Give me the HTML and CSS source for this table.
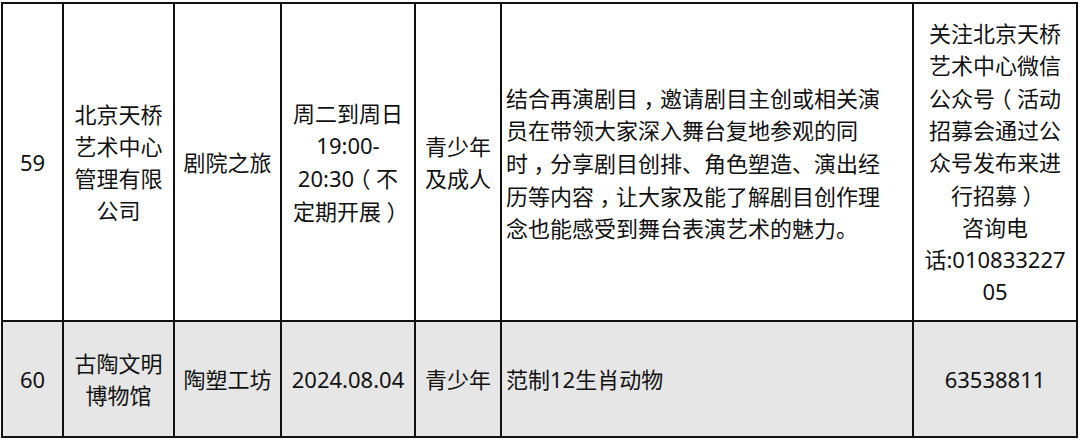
FILE: index.html
```html
<!DOCTYPE html>
<html lang="zh-CN">
<head>
<meta charset="utf-8">
<title>活动表</title>
<link rel="stylesheet" href="styles.css">
</head>
<body>
<div class="table">
  <div class="cell"><p class="txt">59</p></div>
  <div class="cell"><p class="txt">北京天桥<br>艺术中心<br>管理有限<br>公司</p></div>
  <div class="cell"><p class="txt">剧院之旅</p></div>
  <div class="cell"><p class="txt">周二到周日<br>19:00-<br>20:30<span class="p">（</span>不<br>定期开展<span class="p">）</span></p></div>
  <div class="cell"><p class="txt">青少年<br>及成人</p></div>
  <div class="cell desc"><p class="txt">结合再演剧目<span class="p">，</span>邀请剧目主创或相关演<br>员在带领大家深入舞台复地参观的同<br>时<span class="p">，</span>分享剧目创排、角色塑造、演出经<br>历等内容<span class="p">，</span>让大家及能了解剧目创作理<br>念也能感受到舞台表演艺术的魅力。</p></div>
  <div class="cell"><p class="txt">关注北京天桥<br>艺术中心微信<br>公众号<span class="p">（</span>活动<br>招募会通过公<br>众号发布来进<br>行招募<span class="p">）</span><br>咨询电<br>话:010833227<br>05</p></div>

  <div class="cell alt"><p class="txt">60</p></div>
  <div class="cell alt"><p class="txt">古陶文明<br>博物馆</p></div>
  <div class="cell alt"><p class="txt">陶塑工坊</p></div>
  <div class="cell alt"><p class="txt">2024.08.04</p></div>
  <div class="cell alt"><p class="txt">青少年</p></div>
  <div class="cell alt desc"><p class="txt">范制12生肖动物</p></div>
  <div class="cell alt"><p class="txt">63538811</p></div>
</div>
</body>
</html>
```
FILE: styles.css
```css
html, body {
  margin: 0;
  padding: 0;
  background: #ffffff;
}

body {
  font-family: "Noto Sans", "Noto Sans CJK SC", sans-serif;
  font-size: 22px;
  line-height: 32px;
  color: #111111;
}

.table {
  display: grid;
  grid-template-columns: 59px 109px 105px 132px 84px 410px 162px;
  grid-template-rows: 316px 114px;
  gap: 2px;
  padding: 2px;
  margin: 2px 0 0 1px;
  width: max-content;
  background: #111111;
}

.cell {
  background: #ffffff;
  display: flex;
  align-items: center;
  justify-content: center;
  text-align: center;
  white-space: nowrap;
}

.txt {
  margin: 0;
}

.cell.alt {
  background: #e6e6e6;
}

.cell.desc {
  justify-content: flex-start;
  text-align: left;
  padding-left: 4px;
}

.p {
  font-family: "Noto Sans CJK SC", sans-serif;
  font-feature-settings: "halt";
  padding: 0 0.25em;
}
```
